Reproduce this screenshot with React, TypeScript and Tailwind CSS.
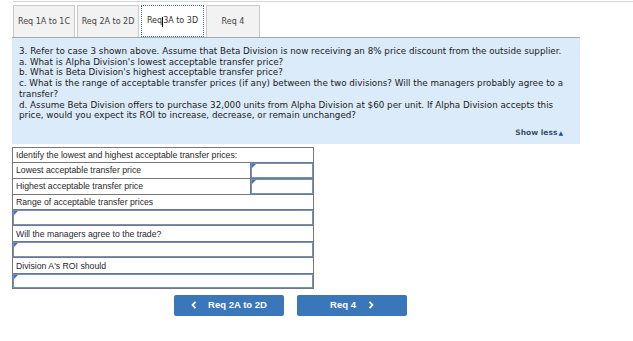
import React from 'react';

const tabs = ['Req 1A to 1C', 'Req 2A to 2D', 'Req 3A to 3D', 'Req 4'];

function AnswerInput({ className = '' }: { className?: string }) {
  return (
    <div className={`relative h-[14px] border border-[#6f93c9] bg-white ${className}`}>
      <span className="absolute left-0 top-0 h-0 w-0 border-l-[4px] border-b-[4px] border-l-[#3b73c4] border-b-transparent" />
    </div>
  );
}

function Chevron({ dir }: { dir: 'left' | 'right' }) {
  return (
    <svg width="6" height="8" viewBox="0 0 6 8" fill="none" stroke="white" strokeWidth="1.8">
      {dir === 'left' ? <path d="M4.5 0.8 1.5 4l3 3.2" /> : <path d="M1.5 0.8 4.5 4l-3 3.2" />}
    </svg>
  );
}

export default function App() {
  return (
    <div className="relative h-[341px] w-[633px] bg-white" style={{ fontFamily: '"DejaVu Sans", Verdana, sans-serif' }}>
      <div className="absolute left-[13px] right-0 top-[1px] h-px bg-[#d6d6d6]" />
      <div className="pl-[12px] pt-[5px]">
        {/* tabs */}
        <div className="flex gap-[2px] pl-px">
          {tabs.map((t, i) => (
            <div
              key={t}
              className={
                i === 2
                  ? 'flex h-[32px] w-[63px] items-center justify-center border border-dotted border-[#3f6fb8] bg-white text-[8px] text-[#333]'
                  : `flex h-[32px] ${i === 3 ? 'w-[54px]' : 'w-[62px]'} items-center justify-center border border-b-0 border-[#c9c9c9] bg-[#f2f2f2] text-[8px] text-[#444]`
              }
            >
              {i === 2 ? (
                <span>
                  Req<span className="inline-block h-[10px] w-px translate-y-[1px] bg-black align-middle" />3A to 3D
                </span>
              ) : (
                t
              )}
            </div>
          ))}
        </div>

        {/* question panel */}
        <div className="w-[568px] border-t border-[#a8a8a8] bg-[#dcebf9] px-[7px] pb-[5px] pt-[8px] text-[8.75px] leading-[10.7px] text-[#1a1a1a]">
          <p>3. Refer to case 3 shown above. Assume that Beta Division is now receiving an 8% price discount from the outside supplier.</p>
          <p>a. What is Alpha Division's lowest acceptable transfer price?</p>
          <p>b. What is Beta Division's highest acceptable transfer price?</p>
          <p>c. What is the range of acceptable transfer prices (if any) between the two divisions? Will the managers probably agree to a transfer?</p>
          <p>d. Assume Beta Division offers to purchase 32,000 units from Alpha Division at $60 per unit. If Alpha Division accepts this price, would you expect its ROI to increase, decrease, or remain unchanged?</p>
          <div className="mt-[7px] flex justify-end pr-[10px] text-[7.5px] font-bold text-[#3a4f72]">
            Show less<span className="ml-px text-[6px] text-[#2b4f8f]">▲</span>
          </div>
        </div>

        {/* answer table */}
        <div
          className="mt-[3px] w-[302px] border border-[#777] text-[8.7px] leading-[14px] text-[#2a1f2a]"
          style={{ fontFamily: '"Liberation Sans", Arial, sans-serif' }}
        >
          <div className="h-[15px] border-b border-[#777] pl-[3px]">Identify the lowest and highest acceptable transfer prices:</div>
          <div className="flex h-[16px] border-b border-[#777]">
            <div className="flex-1 border-r border-[#777] pl-[3px]">Lowest acceptable transfer price</div>
            <AnswerInput className="h-[15px] w-[62px]" />
          </div>
          <div className="flex h-[16px] border-b border-[#777]">
            <div className="flex-1 border-r border-[#777] pl-[3px]">Highest acceptable transfer price</div>
            <AnswerInput className="h-[15px] w-[62px]" />
          </div>
          <div className="h-[15px] border-b border-[#777] pl-[3px]">Range of acceptable transfer prices</div>
          <div className="border-b border-[#777]">
            <AnswerInput className="h-[15px]" />
          </div>
          <div className="h-[16px] border-b border-[#777] pl-[3px] pt-px">Will the managers agree to the trade?</div>
          <div className="border-b border-[#777]">
            <AnswerInput className="h-[15px]" />
          </div>
          <div className="h-[16px] border-b border-[#777] pl-[3px] pt-px">Division A's ROI should</div>
          <AnswerInput className="h-[14px]" />
        </div>

        {/* navigation */}
        <div
          className="mt-[6px] flex gap-[13px] pl-[162px] text-[9.5px] font-bold text-white"
          style={{ fontFamily: '"Liberation Sans", Arial, sans-serif' }}
        >
          <button type="button" className="flex h-[21px] w-[110px] items-center justify-center gap-[11px] rounded-[2px] bg-[#3a77ba]">
            <Chevron dir="left" />
            <span>Req 2A to 2D</span>
          </button>
          <button type="button" className="flex h-[21px] w-[110px] items-center justify-center gap-[12px] rounded-[2px] bg-[#3a77ba]">
            <span>Req 4</span>
            <Chevron dir="right" />
          </button>
        </div>
      </div>
    </div>
  );
}
